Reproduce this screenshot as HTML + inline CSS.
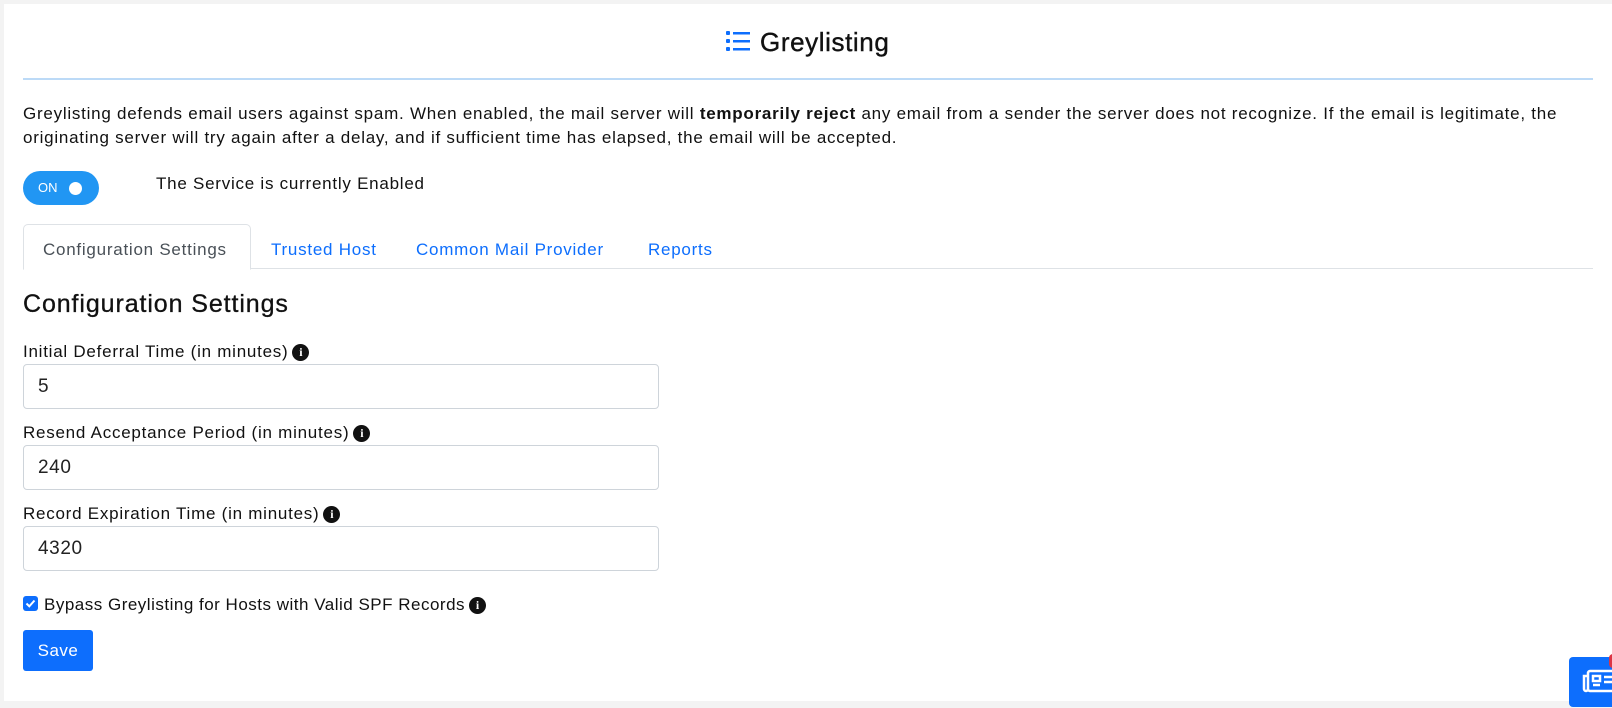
<!DOCTYPE html>
<html><head><meta charset="utf-8"><style>
*{box-sizing:border-box;margin:0;padding:0}
body{width:1612px;height:708px;background:#f3f3f3;font-family:"Liberation Sans",sans-serif;color:#111;overflow:hidden;position:relative}
.card{position:absolute;left:4px;top:4px;right:0;height:697px;background:#fff}
.abs{position:absolute;white-space:nowrap}
.t{font-size:17px;letter-spacing:.75px}
.input{position:absolute;left:23px;width:636px;height:45px;border:1px solid #ced4da;border-radius:4px;font-size:19px;padding:11px 14px;color:#222;letter-spacing:.6px}
.info{display:inline-block;width:17px;height:17px;border-radius:50%;background:#111;color:#fff;font-size:12px;font-weight:bold;text-align:center;line-height:17px;vertical-align:1px;margin-left:4px;letter-spacing:0;font-family:"Liberation Serif",serif}
.tab{position:absolute;top:240px;font-size:17px;color:#0d6efd;letter-spacing:.75px}
</style></head><body>
<div class="card"></div>
<svg class="abs" style="left:726px;top:30px" width="24" height="22" viewBox="0 0 24 22"><g fill="#0d6efd"><rect x="0" y="1" width="4" height="4" rx="1"/><rect x="0" y="9" width="4" height="4" rx="1"/><rect x="0" y="17" width="4" height="4" rx="1"/><rect x="7" y="2" width="17" height="2.5"/><rect x="7" y="10" width="17" height="2.5"/><rect x="7" y="18" width="17" height="2.5"/></g></svg>
<div class="abs" style="left:760px;top:27px;font-size:26px;letter-spacing:.6px;color:#111;-webkit-text-stroke:.4px #111">Greylisting</div>
<div class="abs" style="left:23px;top:78px;width:1570px;height:2px;background:#bcdaf7"></div>
<div class="abs t" style="left:23px;top:102px;line-height:24px">Greylisting defends email users against spam. When enabled, the mail server will <b>temporarily reject</b> any email from a sender the server does not recognize. If the email is legitimate, the<br>originating server will try again after a delay, and if sufficient time has elapsed, the email will be accepted.</div>
<div class="abs" style="left:23px;top:171px;width:76px;height:34px;border-radius:17px;background:#2196f3"></div>
<div class="abs" style="left:38px;top:180px;font-size:13px;color:#fff">ON</div>
<div class="abs" style="left:69px;top:182px;width:13px;height:13px;border-radius:50%;background:#fff"></div>
<div class="abs t" style="left:156px;top:174px">The Service is currently Enabled</div>
<div class="abs" style="left:23px;top:268px;width:1570px;height:1px;background:#dee2e6"></div>
<div class="abs" style="left:23px;top:224px;width:228px;height:46px;border:1px solid #dee2e6;border-bottom-color:#fff;border-radius:5px 5px 0 0;background:#fff"></div>
<div class="tab" style="left:43px;color:#495057">Configuration Settings</div>
<div class="tab" style="left:271px">Trusted Host</div>
<div class="tab" style="left:416px">Common Mail Provider</div>
<div class="tab" style="left:648px">Reports</div>
<div class="abs" style="left:23px;top:290px;font-size:25px;letter-spacing:.9px;-webkit-text-stroke:.3px #111">Configuration Settings</div>
<div class="abs t" style="left:23px;top:342px">Initial Deferral Time (in minutes)<span class="info">i</span></div>
<div class="input" style="top:364px">5</div>
<div class="abs t" style="left:23px;top:423px">Resend Acceptance Period (in minutes)<span class="info">i</span></div>
<div class="input" style="top:445px">240</div>
<div class="abs t" style="left:23px;top:504px">Record Expiration Time (in minutes)<span class="info">i</span></div>
<div class="input" style="top:526px">4320</div>
<div class="abs" style="left:23px;top:596px;width:15px;height:15px;border-radius:3px;background:#0d6efd"></div>
<svg class="abs" style="left:25px;top:598px" width="11" height="11" viewBox="0 0 11 11"><path d="M1.5 5.5 L4.3 8.3 L9.5 2.5" stroke="#fff" stroke-width="2" fill="none"/></svg>
<div class="abs t" style="left:44px;top:595px;letter-spacing:.5px">Bypass Greylisting for Hosts with Valid SPF Records<span class="info">i</span></div>
<div class="abs" style="left:23px;top:630px;width:70px;height:41px;background:#0d6efd;border-radius:3px;color:#fff;font-size:17px;text-align:center;line-height:41px;letter-spacing:.5px">Save</div>
<div class="abs" style="left:1569px;top:657px;width:60px;height:50px;background:#0d6efd;border-radius:4px"></div>
<svg class="abs" style="left:1582px;top:668px" width="30" height="26" viewBox="0 0 30 26"><g fill="none" stroke="#fff" stroke-width="2.5"><rect x="6" y="3" width="26" height="20" rx="2"/><path d="M6 8 H2 V21 a2 2 0 0 0 4 0"/><rect x="11" y="8" width="7" height="5"/><path d="M11 17 H18 M22 9 H30 M22 14 H30"/></g></svg>
<div class="abs" style="left:1609px;top:654px;width:8px;height:14px;border-radius:4px;background:#dc3545"></div>
</body></html>
